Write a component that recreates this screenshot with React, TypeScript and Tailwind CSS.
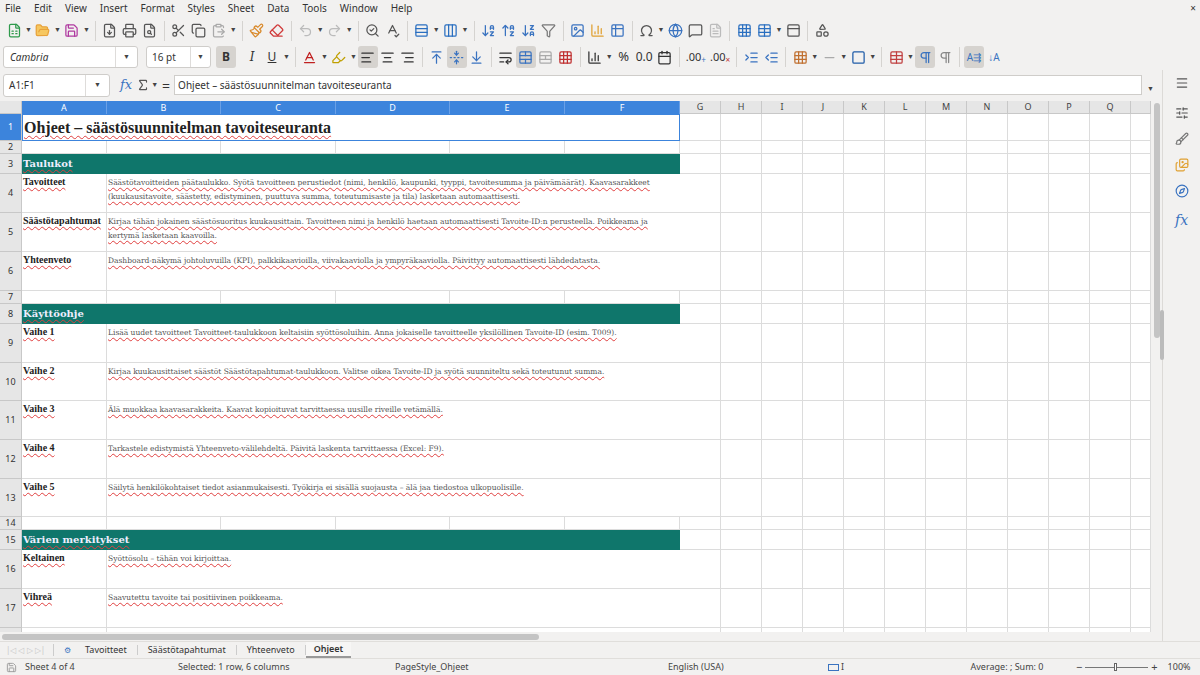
import React from "react";
import {
  FileSpreadsheet, FolderOpen, Save, FileDown, Printer, FileSearch, Scissors, Copy, ClipboardPaste,
  Paintbrush, Eraser, Undo2, Redo2, SearchCheck, SpellCheck, Rows3, Columns3, ArrowDownAZ,
  ArrowUpAZ, ArrowDownZA, Filter, Image, BarChart3, Table2, Omega, Globe, MessageSquare, FileText,
  Grid3x3, PanelTop, Shapes, AlignLeft, AlignCenter, AlignRight, ArrowUpToLine, FoldVertical,
  ArrowDownToLine, WrapText, TableCellsMerge, TableCellsSplit, Calendar, IndentIncrease,
  IndentDecrease, Square, Minus, Pilcrow, Menu, SlidersHorizontal, Brush, Images, Compass, Sigma,
  Baseline, Highlighter, Table
} from "lucide-react";

const serif = { fontFamily: '"DejaVu Serif", "Liberation Serif", serif' };
const lserif = { fontFamily: '"Liberation Serif", "DejaVu Serif", serif' };
const ui = { fontFamily: '"Noto Sans", "Open Sans", sans-serif' };

const Caret = () => <span className="text-[7px] text-[#444] mx-[1px]">▼</span>;
const Sep = () => <div className="w-px h-[20px] bg-[#d5d3d0] mx-[4px]" />;

function I({ children, on }: { children: React.ReactNode; on?: boolean }) {
  return (
    <div className={`h-[22px] min-w-[20px] px-[2px] flex items-center justify-center rounded-[3px] ${on ? "bg-[#d6d3cf]" : ""}`}>
      {children}
    </div>
  );
}

const cols = [
  ["A", 85], ["B", 114], ["C", 115], ["D", 114], ["E", 115], ["F", 115],
  ...["G","H","I","J","K","L","M","N","O","P","Q"].map((c) => [c, 41] as [string, number]),
  ["", 20],
] as [string, number][];

const wavy = "underline decoration-wavy decoration-[#e04040] decoration-[0.5px] underline-offset-2";

type Row =
  | { n: number; h: number; kind: "empty" }
  | { n: number; h: number; kind: "title"; text: string }
  | { n: number; h: number; kind: "head"; text: string }
  | { n: number; h: number; kind: "item"; label: string; text: string };

const rows: Row[] = [
  { n: 1, h: 27, kind: "title", text: "Ohjeet – säästösuunnitelman tavoiteseuranta" },
  { n: 2, h: 13, kind: "empty" },
  { n: 3, h: 20, kind: "head", text: "Taulukot" },
  { n: 4, h: 39, kind: "item", label: "Tavoitteet", text: "Säästötavoitteiden päätaulukko. Syötä tavoitteen perustiedot (nimi, henkilö, kaupunki, tyyppi, tavoitesumma ja päivämäärät). Kaavasarakkeet (kuukausitavoite, säästetty, edistyminen, puuttuva summa, toteutumisaste ja tila) lasketaan automaattisesti." },
  { n: 5, h: 39, kind: "item", label: "Säästötapahtumat", text: "Kirjaa tähän jokainen säästösuoritus kuukausittain. Tavoitteen nimi ja henkilö haetaan automaattisesti Tavoite-ID:n perusteella. Poikkeama ja kertymä lasketaan kaavoilla." },
  { n: 6, h: 39, kind: "item", label: "Yhteenveto", text: "Dashboard-näkymä johtoluvuilla (KPI), palkkikaavioilla, viivakaaviolla ja ympyräkaaviolla. Päivittyy automaattisesti lähdedatasta." },
  { n: 7, h: 13, kind: "empty" },
  { n: 8, h: 20, kind: "head", text: "Käyttöohje" },
  { n: 9, h: 39, kind: "item", label: "Vaihe 1", text: "Lisää uudet tavoitteet Tavoitteet-taulukkoon keltaisiin syöttösoluihin. Anna jokaiselle tavoitteelle yksilöllinen Tavoite-ID (esim. T009)." },
  { n: 10, h: 38, kind: "item", label: "Vaihe 2", text: "Kirjaa kuukausittaiset säästöt Säästötapahtumat-taulukkoon. Valitse oikea Tavoite-ID ja syötä suunniteltu sekä toteutunut summa." },
  { n: 11, h: 39, kind: "item", label: "Vaihe 3", text: "Älä muokkaa kaavasarakkeita. Kaavat kopioituvat tarvittaessa uusille riveille vetämällä." },
  { n: 12, h: 39, kind: "item", label: "Vaihe 4", text: "Tarkastele edistymistä Yhteenveto-välilehdeltä. Päivitä laskenta tarvittaessa (Excel: F9)." },
  { n: 13, h: 38, kind: "item", label: "Vaihe 5", text: "Säilytä henkilökohtaiset tiedot asianmukaisesti. Työkirja ei sisällä suojausta – älä jaa tiedostoa ulkopuolisille." },
  { n: 14, h: 13, kind: "empty" },
  { n: 15, h: 20, kind: "head", text: "Värien merkitykset" },
  { n: 16, h: 39, kind: "item", label: "Keltainen", text: "Syöttösolu – tähän voi kirjoittaa." },
  { n: 17, h: 39, kind: "item", label: "Vihreä", text: "Saavutettu tavoite tai positiivinen poikkeama." },
  { n: 18, h: 39, kind: "item", label: "Punainen", text: "Myöhässä oleva tavoite tai negatiivinen poikkeama." },
];

const restCols = cols.slice(6);

function RestCells({ h }: { h: number }) {
  return (
    <>
      {restCols.map(([c, w], i) => (
        <div key={i} style={{ width: w, height: h }} className="shrink-0 border-r border-b border-[#dcdcdc] bg-white" />
      ))}
    </>
  );
}

function SheetRow({ r }: { r: Row }) {
  const sel = r.n === 1;
  return (
    <div className="flex shrink-0" style={{ height: r.h }}>
      <div className={`w-[22px] shrink-0 flex items-center justify-center text-[9px] border-r border-b border-[#c8c8c8] ${sel ? "bg-[#3c84dc] text-white" : "bg-[#e6e6e6] text-[#333]"}`} style={ui}>
        {r.n}
      </div>
      {r.kind === "empty" &&
        cols.slice(0, 6).map(([c, w]) => (
          <div key={c} style={{ width: w }} className="shrink-0 border-r border-b border-[#dcdcdc] bg-white" />
        ))}
      {r.kind === "title" && (
        <div className="w-[658px] shrink-0 border border-[#3c84dc] bg-white flex items-center pl-[1px]">
          <span className={`text-[16px] font-bold text-[#222] ${wavy}`} style={lserif}>{r.text}</span>
        </div>
      )}
      {r.kind === "head" && (
        <div className="w-[658px] shrink-0 bg-[#0f766b] flex items-center pl-[1px] border-b border-[#0f766b]">
          <span className={`text-[10px] font-bold text-[#eef] ${wavy}`} style={serif}>{r.text}</span>
        </div>
      )}
      {r.kind === "item" && (
        <>
          <div className="w-[85px] shrink-0 border-r border-b border-[#dcdcdc] bg-white pl-[1px] leading-[11px] overflow-hidden whitespace-nowrap">
            <span className={`text-[10px] font-bold text-[#222] ${wavy}`} style={lserif}>{r.label}</span>
          </div>
          <div className="w-[573px] shrink-0 border-b border-[#dcdcdc] bg-white pl-[1px] pr-2 leading-[11px]">
            <span className={`text-[7.5px] text-[#555] ${wavy}`} style={serif}>{r.text}</span>
          </div>
        </>
      )}
      <RestCells h={r.h} />
    </div>
  );
}

export default function App() {
  const ic = 15;
  return (
    <div className="w-[1200px] h-[675px] bg-[#f2f1f0] flex flex-col overflow-hidden text-[#333]" style={ui}>
      <div className="h-[17px] flex items-center px-[5px] gap-[13px] text-[10px] text-[#333] relative">
        {["File","Edit","View","Insert","Format","Styles","Sheet","Data","Tools","Window","Help"].map((m) => <span key={m}>{m}</span>)}
        <span className="absolute right-[4px] top-[1px] text-[10px]">×</span>
      </div>
      <div className="h-[27px] flex items-center px-[4px]">
        <I><FileSpreadsheet size={ic} className="text-[#2f9a4c]" /></I><Caret />
        <I><FolderOpen size={ic} className="text-[#e8a23a]" fill="#f6c760" /></I><Caret />
        <I><Save size={ic} className="text-[#b03aa0]" /></I><Caret />
        <Sep />
        <I><FileDown size={ic} className="text-[#555]" /></I>
        <I><Printer size={ic} className="text-[#555]" /></I>
        <I><FileSearch size={ic} className="text-[#555]" /></I>
        <Sep />
        <I><Scissors size={ic} className="text-[#555]" /></I>
        <I><Copy size={ic} className="text-[#555]" /></I>
        <I><ClipboardPaste size={ic} className="text-[#aaa]" /></I><Caret />
        <Sep />
        <I><Paintbrush size={ic} className="text-[#d98a2c]" /></I>
        <I><Eraser size={ic} className="text-[#d03a3a]" /></I>
        <Sep />
        <I><Undo2 size={ic} className="text-[#bbb]" /></I><Caret />
        <I><Redo2 size={ic} className="text-[#bbb]" /></I><Caret />
        <Sep />
        <I><SearchCheck size={ic} className="text-[#555]" /></I>
        <I><SpellCheck size={ic} className="text-[#555]" /></I>
        <Sep />
        <I><Rows3 size={ic} className="text-[#2a6fc0]" /></I><Caret />
        <I><Columns3 size={ic} className="text-[#2a6fc0]" /></I><Caret />
        <Sep />
        <I><ArrowDownAZ size={ic} className="text-[#3a73c0]" /></I>
        <I><ArrowUpAZ size={ic} className="text-[#3a73c0]" /></I>
        <I><ArrowDownZA size={ic} className="text-[#3a73c0]" /></I>
        <I><Filter size={ic} className="text-[#777]" /></I>
        <Sep />
        <I><Image size={ic} className="text-[#3a73c0]" /></I>
        <I><BarChart3 size={ic} className="text-[#e0a030]" /></I>
        <I><Table2 size={ic} className="text-[#3a73c0]" /></I>
        <Sep />
        <I><Omega size={ic} className="text-[#555]" /></I><Caret />
        <I><Globe size={ic} className="text-[#3a73c0]" /></I>
        <I><MessageSquare size={ic} className="text-[#555]" /></I>
        <I><FileText size={ic} className="text-[#bbb]" /></I>
        <Sep />
        <I><Grid3x3 size={ic} className="text-[#2a6fc0]" /></I>
        <I><Table size={ic} className="text-[#2a6fc0]" /></I><Caret />
        <I><PanelTop size={ic} className="text-[#555]" /></I>
        <Sep />
        <I><Shapes size={ic} className="text-[#555]" /></I>
      </div>
      <div className="h-[26px] flex items-center px-[3px]">
        <div className="w-[135px] h-[22px] bg-white border border-[#cfcdca] rounded-[3px] flex items-center">
          <span className="flex-1 pl-[6px] text-[10px] italic">Cambria</span>
          <div className="w-[22px] h-full border-l border-[#dedcda] flex items-center justify-center"><Caret /></div>
        </div>
        <div className="w-[65px] h-[22px] ml-[8px] bg-white border border-[#cfcdca] rounded-[3px] flex items-center">
          <span className="flex-1 pl-[5px] text-[10px]">16 pt</span>
          <div className="w-[20px] h-full border-l border-[#dedcda] flex items-center justify-center"><Caret /></div>
        </div>
        <div className="w-[5px]" />
        <I on><span className="text-[12px] font-bold w-[16px] text-center">B</span></I>
        <div className="w-[6px]" />
        <I><span className="text-[12px] italic" style={serif}>I</span></I>
        <I><span className="text-[12px] underline">U</span></I><Caret />
        <Sep />
        <I><Baseline size={ic} className="text-[#c02020]" /></I><Caret />
        <I><Highlighter size={ic} className="text-[#c0a000]" /></I><Caret />
        <I on><AlignLeft size={ic} /></I>
        <I><AlignCenter size={ic} /></I>
        <I><AlignRight size={ic} /></I>
        <Sep />
        <I><ArrowUpToLine size={ic} className="text-[#3a73c0]" /></I>
        <I on><FoldVertical size={ic} className="text-[#3a73c0]" /></I>
        <I><ArrowDownToLine size={ic} className="text-[#3a73c0]" /></I>
        <Sep />
        <I><WrapText size={ic} /></I>
        <I on><TableCellsMerge size={ic} className="text-[#3a73c0]" /></I>
        <I><TableCellsSplit size={ic} className="text-[#aaa]" /></I>
        <I><Grid3x3 size={ic} className="text-[#c03030]" /></I>
        <Sep />
        <I><BarChart3 size={ic} /></I><Caret />
        <I><span className="text-[13px]">%</span></I>
        <I><span className="text-[12px]">0.0</span></I>
        <I><Calendar size={ic} /></I>
        <Sep />
        <I><span className="text-[11px]">.00<sub className="text-[#3a73c0]">+</sub></span></I>
        <I><span className="text-[11px]">.00<sub className="text-[#c03030]">×</sub></span></I>
        <Sep />
        <I><IndentIncrease size={ic} className="text-[#3a73c0]" /></I>
        <I><IndentDecrease size={ic} className="text-[#3a73c0]" /></I>
        <Sep />
        <I><Grid3x3 size={ic} className="text-[#c07030]" /></I><Caret />
        <I><Minus size={ic} className="text-[#aaa]" /></I><Caret />
        <I><Square size={ic} className="text-[#1f5ca8]" /></I><Caret />
        <Sep />
        <I><Table size={ic} className="text-[#c04040]" /></I><Caret />
        <I on><Pilcrow size={ic} className="text-[#3a73c0]" /></I>
        <I><Pilcrow size={ic} className="text-[#888]" /></I>
        <Sep />
        <I on><span className="text-[10px] text-[#3a73c0]">A⇶</span></I>
        <I><span className="text-[10px] text-[#3a73c0]">↓A</span></I>
      </div>
      <div className="flex flex-1 min-h-0">
        <div className="flex-1 flex flex-col min-w-0">
          <div className="h-[28px] flex items-center px-[3px] pt-[2px]">
            <div className="w-[107px] h-[23px] bg-white border border-[#cfcdca] rounded-[3px] flex items-center">
              <span className="flex-1 pl-[5px] text-[10px]">A1:F1</span>
              <div className="w-[24px] h-full border-l border-[#dedcda] flex items-center justify-center"><Caret /></div>
            </div>
            <span className="ml-[10px] text-[13px] italic text-[#3a73c0]" style={serif}>fx</span>
            <Sigma size={14} className="ml-[4px] text-[#555]" /><Caret />
            <span className="ml-[3px] text-[14px]">=</span>
            <div className="ml-[4px] flex-1 h-[20px] bg-white border border-[#cfcdca] flex items-center pl-[3px] text-[10px]">
              Ohjeet – säästösuunnitelman tavoiteseuranta
            </div>
            <span className="mx-[4px]"><Caret /></span>
          </div>
          <div className="h-[3px]" />
          <div className="flex-1 flex min-h-0">
            <div className="flex-1 flex flex-col min-w-0 overflow-hidden bg-white">
              <div className="flex h-[13px] shrink-0">
                <div className="w-[22px] shrink-0 bg-[#e6e6e6] border-r border-b border-[#c8c8c8]" />
                {cols.map(([c, w], i) => (
                  <div key={i} style={{ width: w }} className={`shrink-0 flex items-center justify-center text-[9px] border-r ${i < 6 ? "bg-[#3c84dc] text-white border-[#6aa0e6]" : "bg-[#e6e6e6] text-[#444] border-[#c8c8c8] border-b"}`}>
                    {c}
                  </div>
                ))}
              </div>
              <div className="flex-1 overflow-hidden flex flex-col">
                {rows.map((r) => <SheetRow key={r.n} r={r} />)}
              </div>
              <div className="h-[9px] shrink-0 bg-[#f2f1f0] flex items-center">
                <div className="ml-[2px] w-[537px] h-[6px] rounded-[3px] bg-[#c4c4c4]" />
              </div>
            </div>
            <div className="w-[11px] shrink-0 bg-[#f2f1f0] flex flex-col items-center pt-[2px]">
              <div className="w-[6px] h-[235px] rounded-[3px] bg-[#c4c4c4]" />
            </div>
          </div>
        </div>
        <div className="w-[38px] shrink-0 border-l border-[#dcdad7] flex flex-col items-center pt-[6px] gap-[12px] text-[#555] relative">
          <Menu size={14} />
          <SlidersHorizontal size={14} className="mt-[4px]" />
          <Brush size={14} className="text-[#777]" />
          <Images size={14} className="text-[#e0a030]" />
          <Compass size={14} className="text-[#3a73c0]" />
          <span className="text-[14px] italic text-[#3a73c0]" style={serif}>fx</span>
          <div className="absolute left-[-3px] top-[240px] w-[4px] h-[50px] bg-[#bbb] rounded" />
        </div>
      </div>
      <div className="h-[17px] flex items-center text-[9px] border-t border-[#e0dedb]">
        <span className="ml-[6px] text-[8px] leading-[10px] text-[#c8c8c8] whitespace-nowrap">|◁ ◁ ▷ ▷|</span>
        <div className="w-px h-[12px] bg-[#ccc] ml-[8px]" />
        <span className="ml-[10px] text-[#3a73c0] text-[8px]">⚙</span>
        <span className="ml-[14px]">Tavoitteet</span>
        <div className="w-px h-[10px] bg-[#ccc] mx-[10px]" />
        <span>Säästötapahtumat</span>
        <div className="w-px h-[10px] bg-[#ccc] mx-[10px]" />
        <span>Yhteenveto</span>
        <div className="w-px h-[10px] bg-[#ccc] ml-[10px]" />
        <span className="px-[8px] font-semibold h-full flex items-center border-b-2 border-[#999] bg-[#f7f6f5]">Ohjeet</span>
      </div>
      <div className="h-[17px] flex items-center text-[9px] text-[#444] border-t border-[#e0dedb]">
        <Save size={11} className="ml-[6px] text-[#999]" />
        <span className="ml-[8px] w-[153px]">Sheet 4 of 4</span>
        <span className="w-[217px]">Selected: 1 row, 6 columns</span>
        <span className="w-[273px]">PageStyle_Ohjeet</span>
        <span className="w-[160px]">English (USA)</span>
        <span className="w-[110px] flex items-center gap-[2px] text-[#3a73c0]"><span className="inline-block w-[11px] h-[7px] border border-[#3a73c0]" /> <span className="text-[#444]">I</span></span>
        <span className="w-[138px] text-center">Average: ; Sum: 0</span>
        <span className="text-[11px]">−</span>
        <div className="w-[63px] h-px bg-[#777] mx-[3px] relative"><div className="absolute left-[29px] top-[-4px] w-[3px] h-[8px] border border-[#666] bg-white" /></div>
        <span className="text-[11px]">+</span>
        <span className="ml-[10px]">100%</span>
      </div>
    </div>
  );
}
